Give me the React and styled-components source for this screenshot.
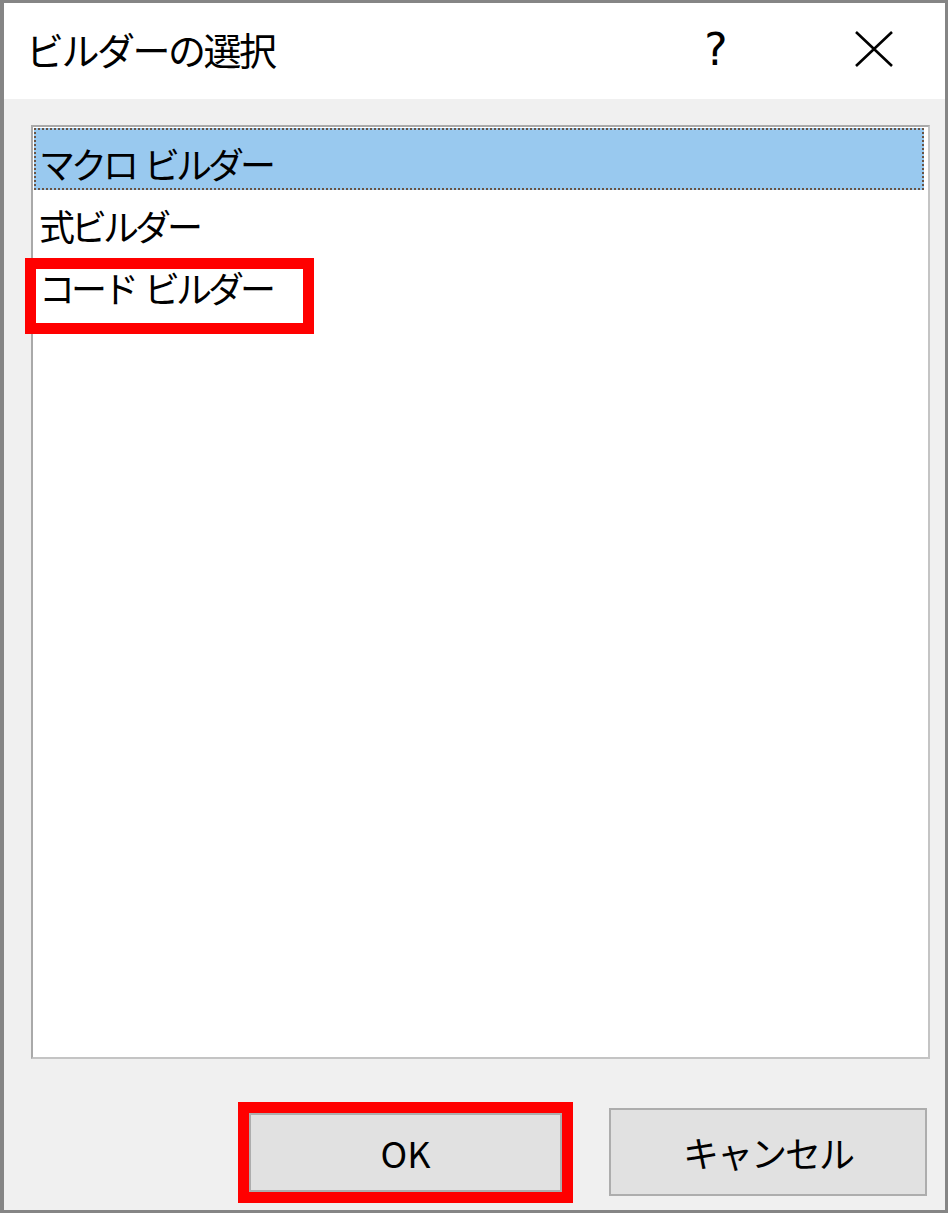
import React from 'react';
import styled, { createGlobalStyle } from 'styled-components';

const FONT = `"Noto Sans CJK JP", "Noto Sans", sans-serif`;

const GlobalStyle = createGlobalStyle`
  html, body {
    margin: 0;
    padding: 0;
    background: #ffffff;
  }
  body {
    font-family: ${FONT};
    color: #000;
  }
`;

const Dialog = styled.div`
  display: flex;
  flex-direction: column;
  width: 948px;
  height: 1213px;
  box-sizing: border-box;
  border: 3px solid #858585;
  border-left-width: 4px;
  background: #f0f0f0;
`;

const TitleBar = styled.header`
  display: flex;
  align-items: center;
  height: 96px;
  padding: 0 52px 4px 22px;
  box-sizing: border-box;
  background: #ffffff;
  flex-shrink: 0;
`;

const Title = styled.h1`
  margin: 0;
  flex: 1;
  font-family: ${FONT};
  font-size: 38px;
  font-weight: 400;
  letter-spacing: -2.5px;
  line-height: 1;
`;

const TitleButton = styled.button`
  display: flex;
  align-items: center;
  justify-content: center;
  width: ${({ $w }) => $w}px;
  height: 60px;
  margin-left: ${({ $ml }) => $ml || 0}px;
  padding: 0;
  border: none;
  background: transparent;
  font-family: "DejaVu Sans", sans-serif;
  font-size: 44px;
  color: #000;
`;

const Body = styled.main`
  display: flex;
  flex-direction: column;
  flex: 1;
  padding: 26px 15px 0 27px;
  min-height: 0;
`;

const ListBox = styled.ul`
  margin: 0;
  padding: 1px;
  list-style: none;
  height: 934px;
  box-sizing: border-box;
  background: #ffffff;
  border: 2px solid #a9a9a9;
  border-right-color: #c4c4c4;
  border-bottom-color: #c4c4c4;
`;

const Item = styled.li`
  position: relative;
  display: flex;
  align-items: center;
  height: 62px;
  box-sizing: border-box;
  padding: 8px 0 0 3px;
  font-size: 36px;
  letter-spacing: -4px;
  white-space: pre;
  background: ${({ $selected }) => ($selected ? '#99c9ef' : 'transparent')};
  border: 2px dotted ${({ $selected }) => ($selected ? '#6a5444' : 'transparent')};
  margin-right: 3px;
`;

const Gap = styled.span`
  display: inline-block;
  width: 9px;
`;

const Marker = styled.span`
  position: absolute;
  left: -11px;
  top: 4px;
  width: 289px;
  height: 76px;
  box-sizing: border-box;
  border: 11px solid #ff0000;
  pointer-events: none;
`;

const Footer = styled.footer`
  display: flex;
  justify-content: flex-end;
  align-items: center;
  gap: 47px;
  padding: 49px 3px 0 0;
`;

const Button = styled.button`
  width: ${({ $w }) => $w}px;
  height: ${({ $h }) => $h}px;
  box-sizing: border-box;
  background: #e1e1e1;
  border: 2px solid #adadad;
  font-family: ${FONT};
  font-size: 36px;
  letter-spacing: ${({ $ls }) => $ls || 0}px;
  color: #000;
  padding: 0;
  outline: ${({ $marked }) => ($marked ? '11px solid #ff0000' : 'none')};
`;

const CloseIcon = () => (
  <svg width="38" height="36" viewBox="0 0 38 36">
    <path d="M1 1 L37 35 M37 1 L1 35" stroke="#000" strokeWidth="2.6" fill="none" />
  </svg>
);

const items = [
  { label: ['マクロ', 'ビルダー'], selected: true },
  { label: ['式ビルダー'] },
  { label: ['コード', 'ビルダー'], marked: true }
];

const App = () => (
  <>
    <GlobalStyle />
    <Dialog>
      <TitleBar>
        <Title>ビルダーの選択</Title>
        <TitleButton $w={40}>?</TitleButton>
        <TitleButton $w={38} $ml={119}>
          <CloseIcon />
        </TitleButton>
      </TitleBar>
      <Body>
        <ListBox>
          {items.map(({ label, selected, marked }) => (
            <Item key={label.join(' ')} $selected={selected}>
              {label[0]}
              {label[1] && <Gap />}
              {label[1]}
              {marked && <Marker />}
            </Item>
          ))}
        </ListBox>
        <Footer>
          <Button $w={313} $h={79} $marked>
            OK
          </Button>
          <Button $w={318} $h={88} $ls={-2}>
            キャンセル
          </Button>
        </Footer>
      </Body>
    </Dialog>
  </>
);

export default App;
